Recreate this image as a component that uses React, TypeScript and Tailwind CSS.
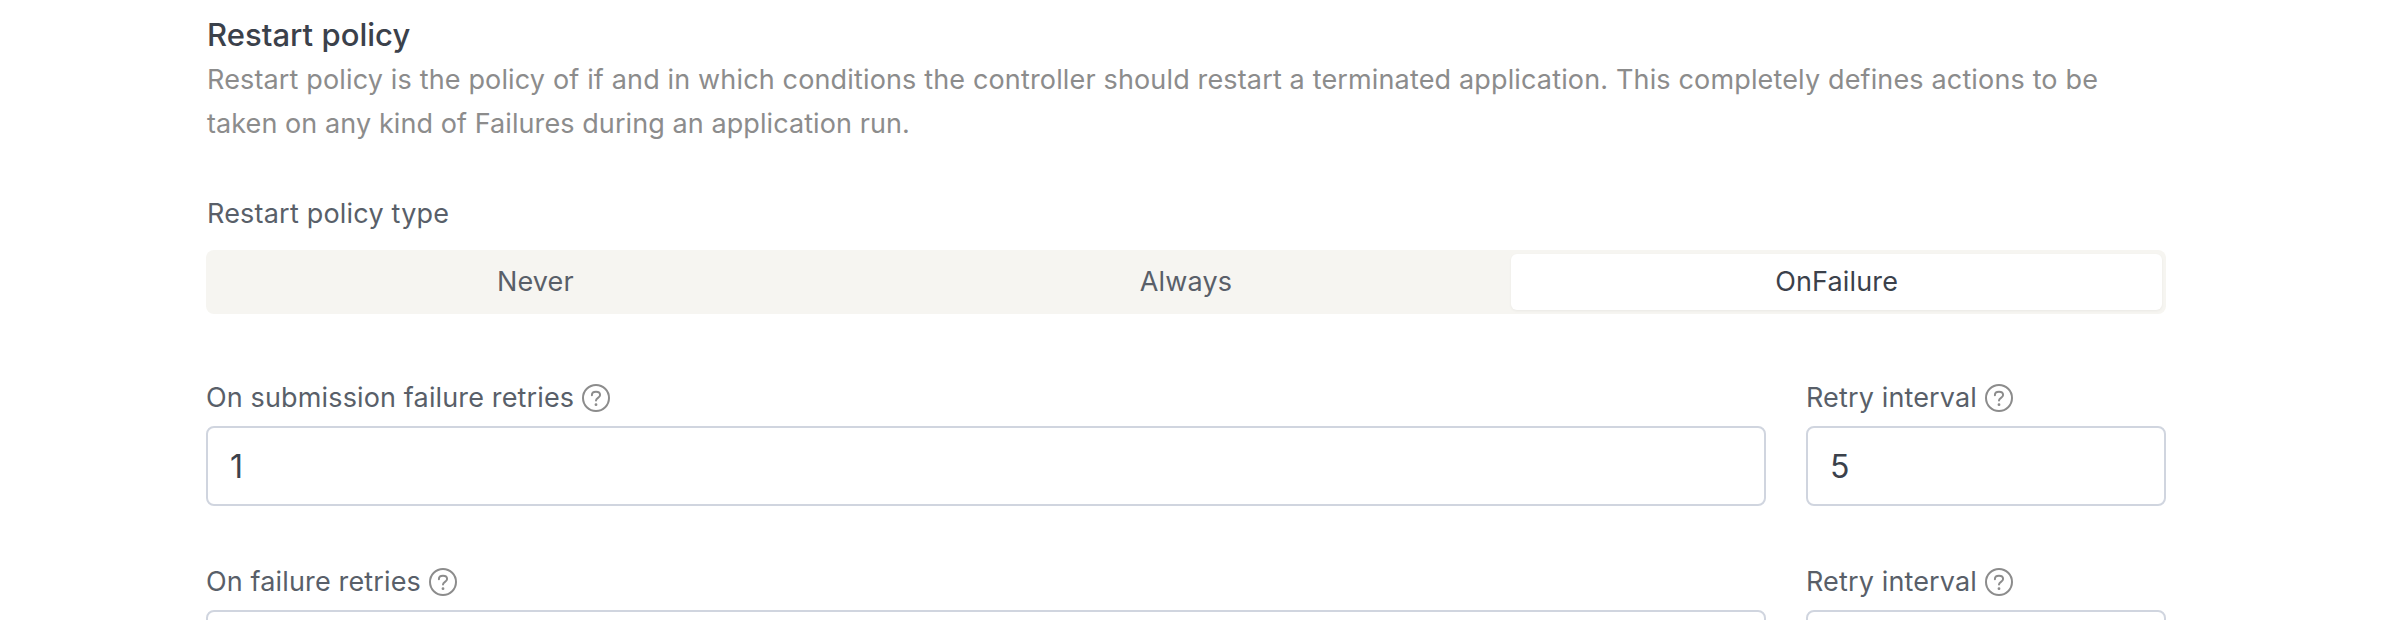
import React from 'react';

const HelpIcon = () => (
  <svg width="28" height="28" viewBox="0 0 28 28" fill="none" stroke="#8c8c8c" strokeWidth="2" strokeLinecap="round">
    <circle cx="14" cy="14" r="13" />
    <path d="M9.9 11.2c0-2.1 1.8-3.4 4.1-3.4s4.1 1.3 4.1 3.3c0 2.7-4.1 2.8-4.1 5.3" />
    <circle cx="14" cy="20.7" r="1.4" fill="#8c8c8c" stroke="none" />
  </svg>
);

const policies = ['Never', 'Always', 'OnFailure'];

const Field = ({ label, value }: { label: string; value: string }) => (
  <div>
    <div className="flex h-[44px] items-center gap-2 text-[27px] tracking-[0.14px] text-[#595f69]">
      <span className="whitespace-nowrap">{label}</span>
      <HelpIcon />
    </div>
    <input
      className="mt-[6px] block h-[80px] w-full rounded-lg border-2 border-[#d0d5df] px-[22px] text-[32px] text-[#3b414b] outline-none"
      defaultValue={value}
    />
  </div>
);

const App = () => {
  const [selected, setSelected] = React.useState('OnFailure');

  return (
    <div className="h-[620px] overflow-hidden bg-white pt-[12px] pr-[226px] pl-[206px] font-['Inter',sans-serif]">
      <h2 className="h-[46px] pl-px text-[31px] leading-[45px] font-[550] tracking-[0.03px] text-[#3b414b]">
        Restart policy
      </h2>
      <p className="pl-px text-[27px] leading-[44px] tracking-[0.15px] text-[#8c8c8c]">
        <span className="block whitespace-nowrap">
          Restart policy is the policy of if and in which conditions the controller should restart a terminated application. This completely defines actions to be
        </span>
        <span className="block tracking-[0.08px]">taken on any kind of Failures during an application run.</span>
      </p>
      <div className="mt-[46px] h-[44px] pl-px text-[27px] leading-[44px] tracking-[0.2px] text-[#595f69]">
        Restart policy type
      </div>
      <div className="mt-[14px] grid h-[64px] grid-cols-3 rounded-lg bg-[#f6f5f1] p-[4px]">
        {policies.map((policy) => (
          <button
            key={policy}
            onClick={() => setSelected(policy)}
            className={`rounded-md text-[27px] tracking-[0.15px] ${
              policy === selected ? 'bg-white text-[#3b414b] shadow-[0_1px_3px_rgba(0,0,0,0.05)]' : 'text-[#595f69]'
            }`}
          >
            {policy}
          </button>
        ))}
      </div>
      <div className="mt-[62px] grid grid-cols-[1fr_360px] gap-x-[40px] gap-y-[54px]">
        <Field label="On submission failure retries" value="1" />
        <Field label="Retry interval" value="5" />
        <Field label="On failure retries" value="" />
        <Field label="Retry interval" value="" />
      </div>
    </div>
  );
};

export default App;
